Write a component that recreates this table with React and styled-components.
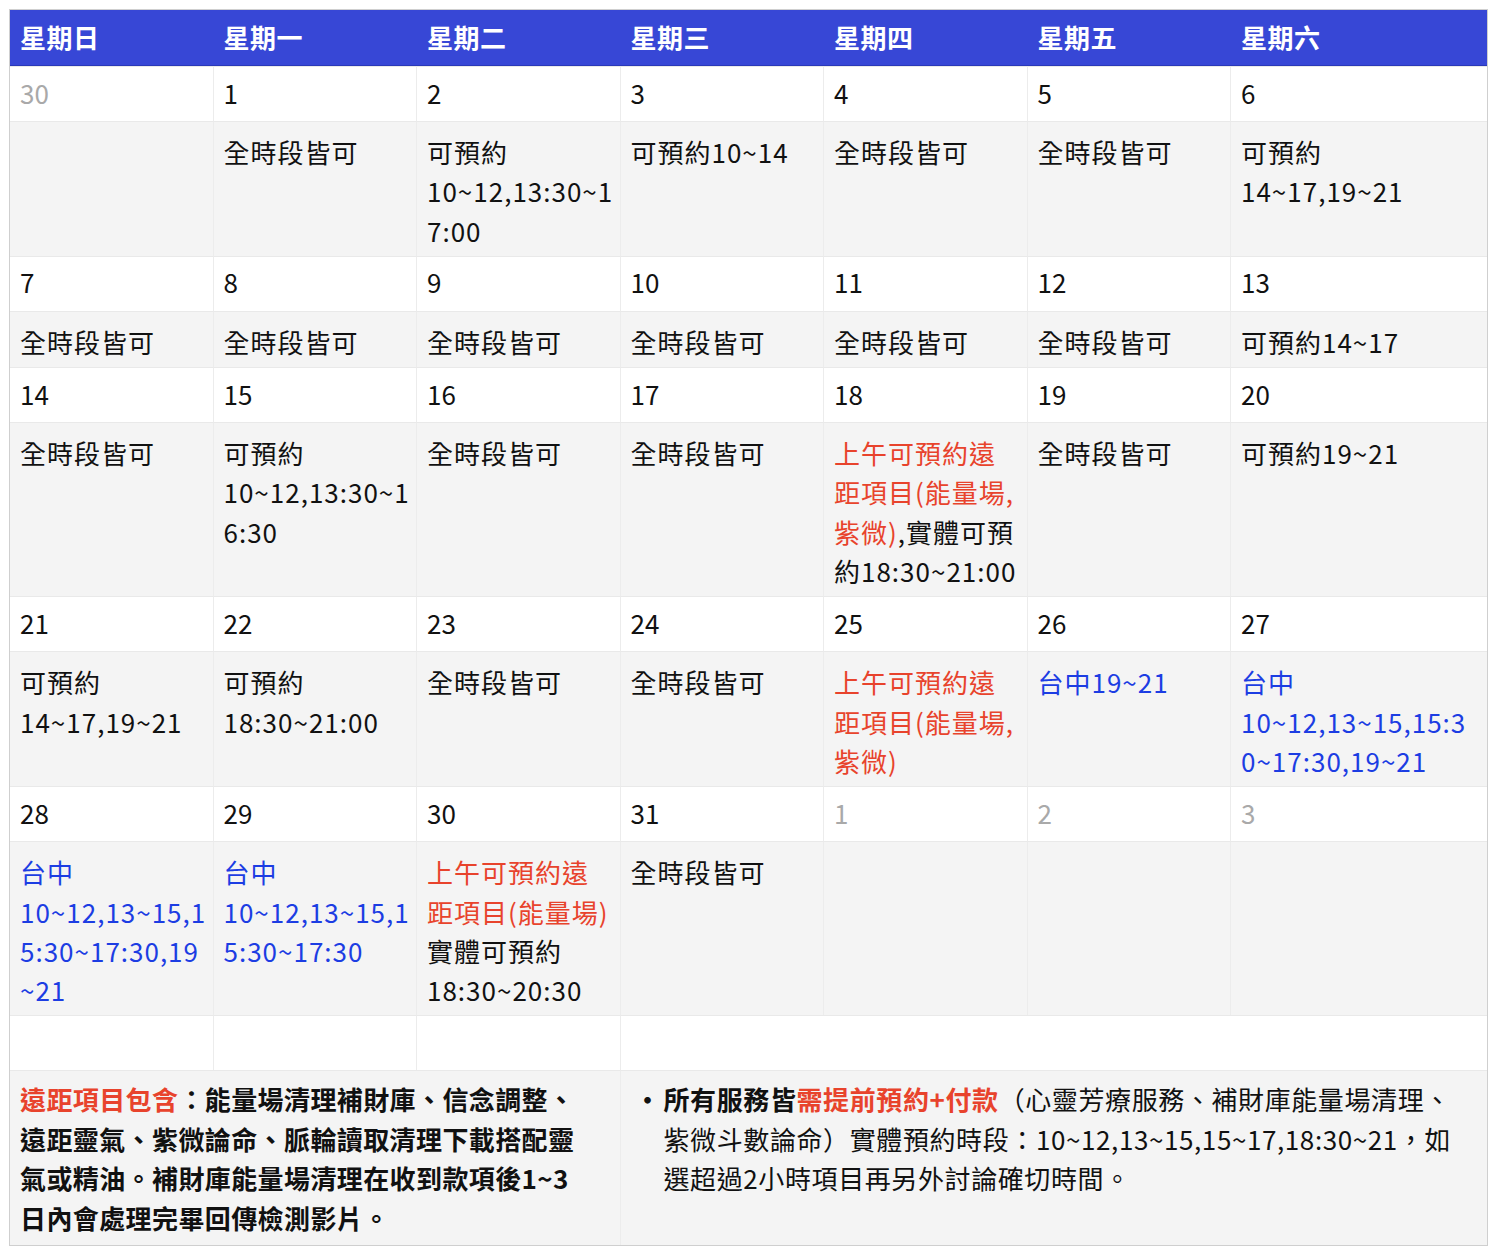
import React from 'react';
import styled, { createGlobalStyle } from 'styled-components';

const GlobalStyle = createGlobalStyle`
  body {
    margin: 0;
    background: #fff;
    color: #111;
    font-family: "Noto Sans CJK TC", "Noto Sans", sans-serif;
  }
`;

const tones = {
  red: '#e8432c',
  blue: '#1c3de3',
  muted: '#a9a9a9',
};

const Table = styled.div`
  margin: 9px 0 0 9px;
  width: 1479px;
  box-sizing: border-box;
  border: 1px solid #cfcfcf;
  display: grid;
  grid-template-columns: repeat(6, 203.5px) 1fr;
`;

const HeadCell = styled.div`
  height: 56px;
  box-sizing: border-box;
  background: #3747d6;
  border-bottom: 1px solid #2a39b8;
  color: #fff;
  font-size: 26px;
  font-weight: 700;
  letter-spacing: 0.5px;
  padding: 0 0 2px 10px;
  display: flex;
  align-items: center;
`;

const Cell = styled.div`
  box-sizing: border-box;
  border-top: 1px solid #e9e9e9;
  border-right: ${p => (p.$last ? 'none' : '1px solid #ececec')};
  grid-column: ${p => p.$span || 'auto'};
`;

const DateCell = styled(Cell)`
  height: 55px;
  background: #fff;
  padding: 0 10px 4px;
  display: flex;
  align-items: center;
  font-size: 26px;
  color: ${p => (p.$muted ? tones.muted : '#111')};
`;

const InfoCell = styled(Cell)`
  background: #f4f4f4;
  padding: 10px 10px 6px;
  font-size: 26px;
  line-height: 39.3px;
  letter-spacing: 1px;
  white-space: nowrap;
  overflow: hidden;
`;

const BlankCell = styled(Cell)`
  height: 55px;
  background: #fff;
`;

const NoteCell = styled(Cell)`
  background: #f4f4f4;
  padding: 8px 10px 8px;
  font-size: 26px;
  line-height: 39.5px;
  white-space: nowrap;
  display: flex;
`;

const Line = styled.div``;

const Seg = styled.span`
  color: ${p => (p.$tone ? tones[p.$tone] : 'inherit')};
`;

const BoldNote = styled.div`
  font-weight: 700;
  letter-spacing: 0.4px;
`;

const Bullet = styled.span`
  width: 29px;
  padding-left: 4px;
  flex: none;
  font-weight: 700;
`;

const PlainNote = styled.div`
  letter-spacing: 0.6px;
`;

const Strong = styled.span`
  font-weight: 700;
  color: ${p => (p.$tone ? tones[p.$tone] : 'inherit')};
`;

const days = ['星期日', '星期一', '星期二', '星期三', '星期四', '星期五', '星期六'];

const ALL = ['全時段皆可'];
const R = (t) => [t, 'red'];
const B = (t) => [t, 'blue'];

const weeks = [
  {
    dates: [{ n: 30, muted: true }, { n: 1 }, { n: 2 }, { n: 3 }, { n: 4 }, { n: 5 }, { n: 6 }],
    infos: [
      [],
      ALL,
      ['可預約', '10~12,13:30~1', '7:00'],
      ['可預約10~14'],
      ALL,
      ALL,
      ['可預約', '14~17,19~21'],
    ],
  },
  {
    dates: [{ n: 7 }, { n: 8 }, { n: 9 }, { n: 10 }, { n: 11 }, { n: 12 }, { n: 13 }],
    infos: [ALL, ALL, ALL, ALL, ALL, ALL, ['可預約14~17']],
  },
  {
    dates: [{ n: 14 }, { n: 15 }, { n: 16 }, { n: 17 }, { n: 18 }, { n: 19 }, { n: 20 }],
    infos: [
      ALL,
      ['可預約', '10~12,13:30~1', '6:30'],
      ALL,
      ALL,
      [[R('上午可預約遠')], [R('距項目(能量場,')], [R('紫微)'), [',實體可預']], '約18:30~21:00'],
      ALL,
      ['可預約19~21'],
    ],
  },
  {
    dates: [{ n: 21 }, { n: 22 }, { n: 23 }, { n: 24 }, { n: 25 }, { n: 26 }, { n: 27 }],
    infos: [
      ['可預約', '14~17,19~21'],
      ['可預約', '18:30~21:00'],
      ALL,
      ALL,
      [[R('上午可預約遠')], [R('距項目(能量場,')], [R('紫微)')]],
      [[B('台中19~21')]],
      [[B('台中')], [B('10~12,13~15,15:3')], [B('0~17:30,19~21')]],
    ],
  },
  {
    dates: [
      { n: 28 }, { n: 29 }, { n: 30 }, { n: 31 },
      { n: 1, muted: true }, { n: 2, muted: true }, { n: 3, muted: true },
    ],
    infos: [
      [[B('台中')], [B('10~12,13~15,1')], [B('5:30~17:30,19')], [B('~21')]],
      [[B('台中')], [B('10~12,13~15,1')], [B('5:30~17:30')]],
      [[R('上午可預約遠')], [R('距項目(能量場)')], '實體可預約', '18:30~20:30'],
      ALL,
      [],
      [],
      [],
    ],
  },
];

function InfoLines({ lines }) {
  return lines.map((line, i) => (
    <Line key={i}>
      {typeof line === 'string'
        ? line
        : line.map(([t, tone], j) => (
            <Seg key={j} $tone={tone}>
              {t}
            </Seg>
          ))}
    </Line>
  ));
}

export default function App() {
  return (
    <>
      <GlobalStyle />
      <Table>
        {days.map(d => (
          <HeadCell key={d}>{d}</HeadCell>
        ))}

        {weeks.map((w, wi) => (
          <React.Fragment key={wi}>
            {w.dates.map((d, i) => (
              <DateCell key={'d' + i} $muted={d.muted} $last={i === 6}>
                {d.n}
              </DateCell>
            ))}
            {w.infos.map((lines, i) => (
              <InfoCell key={'i' + i} $last={i === 6}>
                <InfoLines lines={lines} />
              </InfoCell>
            ))}
          </React.Fragment>
        ))}

        <BlankCell />
        <BlankCell />
        <BlankCell />
        <BlankCell $span="4 / 8" $last />

        <NoteCell $span="1 / 4">
          <BoldNote>
            <Line>
              <Seg $tone="red">遠距項目包含</Seg>：能量場清理補財庫、信念調整、
            </Line>
            <Line>遠距靈氣、紫微論命、脈輪讀取清理下載搭配靈</Line>
            <Line>氣或精油。補財庫能量場清理在收到款項後1~3</Line>
            <Line>日內會處理完畢回傳檢測影片。</Line>
          </BoldNote>
        </NoteCell>
        <NoteCell $span="4 / 8" $last>
          <Bullet>•</Bullet>
          <PlainNote>
            <Line>
              <Strong>所有服務皆</Strong>
              <Strong $tone="red">需提前預約+付款</Strong>（心靈芳療服務、補財庫能量場清理、
            </Line>
            <Line>紫微斗數論命）實體預約時段：10~12,13~15,15~17,18:30~21，如</Line>
            <Line>選超過2小時項目再另外討論確切時間。</Line>
          </PlainNote>
        </NoteCell>
      </Table>
    </>
  );
}
